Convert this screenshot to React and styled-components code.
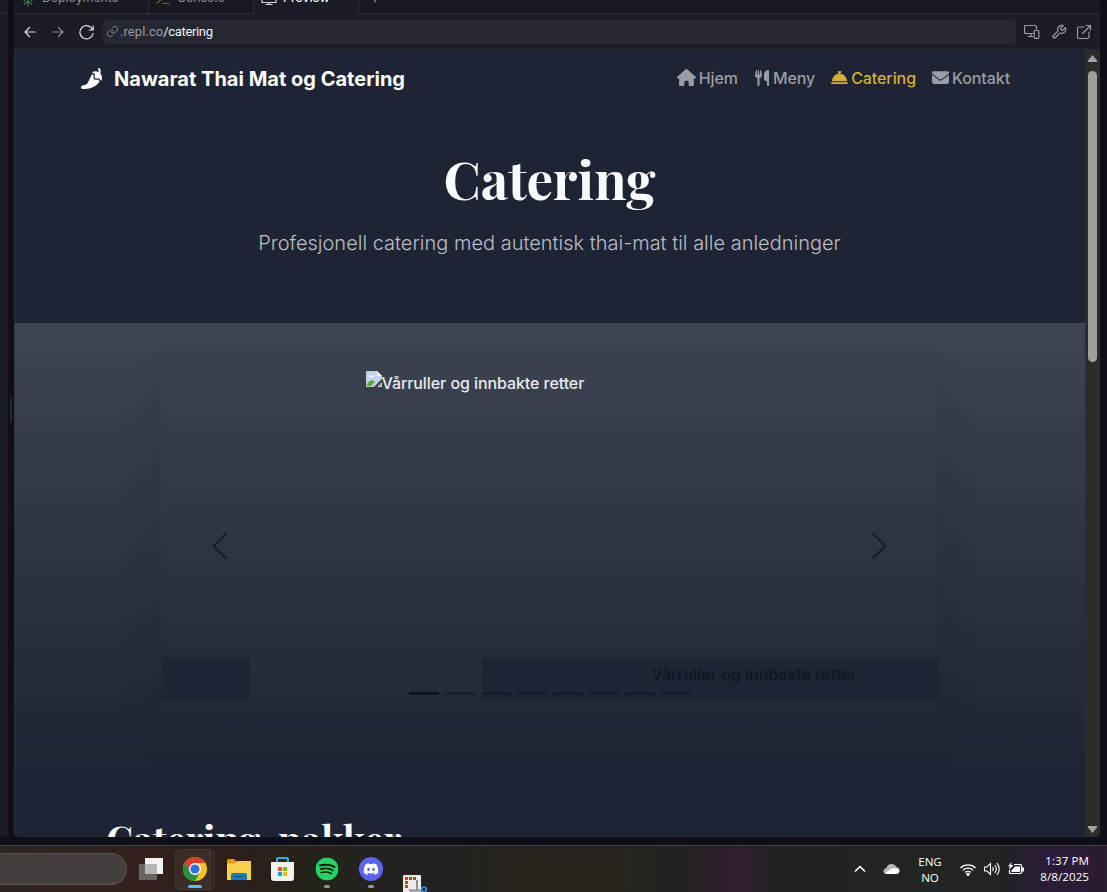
import React from "react";
import styled, { createGlobalStyle } from "styled-components";
import { FaHouse, FaUtensils, FaBellConcierge, FaEnvelope, FaPepperHot } from "react-icons/fa6";
import { SiSpotify, SiDiscord } from "react-icons/si";

const Global = createGlobalStyle`
  *, *::before, *::after { box-sizing: border-box; }
  body { margin: 0; background: #0e0f18; }
  h1, h2, p { margin: 0; }
`;

const Screen = styled.div`
  width: 1107px;
  height: 892px;
  overflow: hidden;
  display: flex;
  flex-direction: column;
  background: #0e0f18;
  font-family: Inter, sans-serif;
`;

const Workspace = styled.div`
  height: 837px;
  display: flex;
`;

const SidePane = styled.div`
  width: 8px;
  height: 837px;
  padding-top: 13px;
  background: #1b1d26;
  border-radius: 0 0 4px 0;
  &::after { content: ""; display: block; height: 1px; background: #2a2d37; }
`;

const Gutter = styled.div`
  width: 6px;
  display: flex;
  align-items: center;
  justify-content: center;
  &::before { content: ""; width: 2px; height: 24px; margin-top: -18px; background: #252832; }
`;

const Pane = styled.div`
  width: 1086px;
  display: flex;
  flex-direction: column;
  background: #1b1d26;
  border-radius: 0 0 5px 5px;
  overflow: hidden;
`;

const Tabs = styled.div`
  height: 14px;
  display: flex;
  background: #181821;
`;

const Tab = styled.div`
  width: ${(p) => p.$w}px;
  height: 14px;
  overflow: hidden;
  display: flex;
  align-items: flex-start;
  gap: ${(p) => p.$gap ?? 6}px;
  padding-left: ${(p) => p.$pad}px;
  font: ${(p) => (p.$active ? 500 : 400)} 12.3px/16px Inter, sans-serif;
  color: ${(p) => (p.$active ? "#f2f3f7" : "#8d909c")};
  background: ${(p) => (p.$active ? "#1b1d26" : "transparent")};
  border-right: 1px solid ${(p) => (p.$fill ? "transparent" : "#2a2d37")};
  border-bottom: 1px solid ${(p) => (p.$active ? "#1b1d26" : "#2a2d37")};
  flex: ${(p) => (p.$fill ? 1 : "none")};
  svg { flex: none; margin-top: -9px; }
  span { margin-top: -10px; }
`;

const Toolbar = styled.div`
  height: 36px;
  display: flex;
  align-items: center;
  padding: 0 8px 0 8px;
  border-bottom: 1px solid #272a35;
`;

const ToolIcon = styled.svg`
  width: ${(p) => p.$size || 16}px;
  height: ${(p) => p.$size || 16}px;
  flex: none;
  margin-right: ${(p) => p.$mr || 0}px;
  fill: none;
  stroke: ${(p) => p.$c || "#9a9da8"};
  stroke-width: ${(p) => p.$sw || 1.2};
  stroke-linecap: round;
  stroke-linejoin: round;
`;

const Address = styled.div`
  width: 914px;
  height: 24px;
  margin-right: 8px;
  padding-left: 4px;
  display: flex;
  align-items: center;
  border-radius: 4px;
  background: #252830;
  color: #969aa5;
  font: 400 13px/24px Roboto, sans-serif;
  letter-spacing: 0.08px;
  b { font-weight: 400; color: #f0f1f4; letter-spacing: -0.35px; }
`;

const Viewport = styled.div`
  flex: 1;
  display: flex;
  min-height: 0;
`;

const Page = styled.main`
  width: 1071px;
  height: 787px;
  overflow: hidden;
  border-left: 1px solid #2a3342;
  background: #1e2433;
`;

const Nav = styled.nav`
  height: 57px;
  display: flex;
  align-items: center;
  justify-content: space-between;
  padding: 0 75px 0 66px;
`;

const Brand = styled.div`
  display: flex;
  align-items: center;
  gap: 12px;
  color: #fff;
  font-size: 20px;
  font-weight: 700;
  letter-spacing: 0.01px;
  white-space: nowrap;
`;

const Links = styled.div`
  display: flex;
  gap: 16px;
  margin-top: -2px;
`;

const Link = styled.a`
  display: flex;
  align-items: center;
  gap: 3px;
  font-size: 16px;
  font-weight: 500;
  line-height: 24px;
  letter-spacing: -0.09px;
  color: ${(p) => (p.$active ? "#d4af37" : "#9a9da5")};
  svg { width: ${(p) => p.$iw}px; height: ${(p) => p.$ih}px; }
`;

const Hero = styled.header`
  height: 216px;
  display: flex;
  flex-direction: column;
  align-items: center;
  padding: 39px 1px 0 0;
`;

const Title = styled.h1`
  font: 700 52.8px/64px "Playfair Display", "Liberation Serif", serif;
  color: #f8fafc;
`;

const Lead = styled.p`
  margin-top: 17px;
  font-size: 20px;
  font-weight: 300;
  line-height: 32px;
  color: #b9bdc5;
  white-space: nowrap;
`;

const Showcase = styled.section`
  height: 448px;
  padding: 48px 147px 0 147px;
  background: linear-gradient(180deg, #3e4451 0%, #1e2433 100%);
`;

const Carousel = styled.div`
  position: relative;
  height: 350px;
  border-radius: 15px;
  box-shadow: 0 14px 40px rgba(25, 30, 46, 0.17);
`;

const Slide = styled.div`
  height: 286px;
  display: flex;
  align-items: flex-start;
  padding-left: 204px;
  color: #e8eaee;
  font-size: 16px;
  font-weight: 500;
  line-height: 24px;
  letter-spacing: -0.08px;
`;

const AltText = styled.span`
  margin-left: -0.5px;
`;

const Captions = styled.div`
  height: 44px;
  display: flex;
  justify-content: space-between;
`;

const Caption = styled.div`
  width: ${(p) => p.$w}px;
  padding-left: ${(p) => p.$pad || 0}px;
  background: #1e2434;
  border-radius: ${(p) => p.$radius};
  color: #101624;
  font-size: 16px;
  font-weight: 500;
  line-height: 34px;
  white-space: nowrap;
`;

const Arrow = styled.svg`
  position: absolute;
  top: 158px;
  ${(p) => p.$side}: 42px;
  width: 32px;
  height: 32px;
  fill: none;
  stroke: #191d26;
  stroke-width: 2;
  stroke-linecap: round;
  stroke-linejoin: round;
`;

const Indicators = styled.div`
  position: absolute;
  left: 0;
  right: 1px;
  top: 321px;
  display: flex;
  justify-content: center;
  gap: 6px;
`;

const Indicator = styled.span`
  width: 30px;
  height: 3px;
  background: #0c111f;
  opacity: ${(p) => (p.$active ? 0.9 : 0.45)};
`;

const Packages = styled.h2`
  margin: 45px 0 0 91px;
  font: 700 38.4px/46px "Playfair Display", "Liberation Serif", serif;
  color: #f8fafc;
  white-space: nowrap;
`;

const Scrollbar = styled.div`
  width: 15px;
  height: 787px;
  display: flex;
  flex-direction: column;
  align-items: center;
  padding: 5px 0 4px;
  background: #2c2c2c;
  svg { display: block; fill: #a0a0a0; }
`;

const Thumb = styled.div`
  width: 9px;
  height: 291px;
  margin: 9px 0 auto;
  border-radius: 5px;
  background: #9f9f9f;
`;

const Taskbar = styled.footer`
  height: 47px;
  margin-top: 8px;
  display: flex;
  border-top: 1px solid #414146;
  background: linear-gradient(90deg, #2c2523 0, #33221b 125px, #2f2019 200px, #29221a 260px, #24231b 330px, #232223 430px, #28231b 530px, #28241d 620px, #232222 680px, #2f1e2f 740px, #232224 775px, #20241f 800px, #22251f 900px, #222325 1000px, #2b1b38 1050px, #2b1c30 1107px);
`;

const SearchPill = styled.div`
  width: 127px;
  height: 32px;
  margin: 7px 10px 0 0;
  border-radius: 0 16px 16px 0;
  border: 1px solid #5a5453;
  border-left: 0;
  background: #443f3d;
`;

const TaskItem = styled.div`
  width: ${(p) => p.$w || 44}px;
  margin-right: ${(p) => p.$mr || 0}px;
  height: 46px;
  padding-top: 11px;
  display: flex;
  flex-direction: column;
  align-items: center;
  &::after {
    content: "";
    width: ${(p) => (p.$state === "active" ? 14 : 6)}px;
    height: 3px;
    margin-top: 4px;
    border-radius: 2px;
    background: ${(p) => (p.$state === "active" ? "#4cc2ff" : p.$state === "open" ? "#98958f" : "transparent")};
  }
  svg { display: block; flex: none; }
`;

const ActiveItem = styled(TaskItem)`
  width: 40px;
  height: 41px;
  margin: 3px 2px 0 -2px;
  padding: 7px 1px 0 0;
  border-radius: 5px;
  border: 1px solid #463630;
  background: linear-gradient(90deg, #3b2c26 34px, #4b3c34 34px, #4b3c34 35px, #33261f 35px);
`;

const Snip = styled.div`
  padding: 29px 0 0 9px;
  svg { display: block; }
`;

const Tray = styled.div`
  margin-left: auto;
  display: flex;
  align-items: center;
  padding-right: 18px;
  color: #fff;
  font: 400 11.6px/16px "Open Sans", sans-serif;
  svg { display: block; flex: none; }
`;

const Lang = styled.div`
  width: 24px;
  margin: 2px 18px 0 18px;
  display: flex;
  flex-direction: column;
  align-items: center;
`;

const Clock = styled.div`
  margin-left: 14px;
  width: 51px;
  display: flex;
  flex-direction: column;
  align-items: flex-end;
  white-space: nowrap;
  letter-spacing: 0.05px;
`;

const TrayIcons = styled.div`
  display: flex;
  align-items: center;
  gap: 8px;
`;

const Cloud = styled.svg`
  margin-left: 17px;
`;

const BrokenImage = () => (
  <svg width="16" height="16" viewBox="0 0 16 16">
    <path d="M0 0h11l5 5v11H0z" fill="#c5c8cc" />
    <path d="M1 1h10v4h4v1L6 15H1z" fill="#c3d5fb" />
    <path d="M3 6c0-2 2-2 2.400-1C7 4 8 5 8 6z" fill="#fff" />
    <path d="M1 15v-2c2-4 6-5 8-2l-4 4z" fill="#55ab3a" />
    <path d="M11 0l5 5h-5z" fill="#f1f3f6" />
    <path d="M8 16l8-8v3l-5 5z" fill="#333947" />
    <path d="M12 15l3-3v3z" fill="#80b978" />
  </svg>
);

const Chrome = () => (
  <svg width="24" height="24" viewBox="0 0 48 48">
    <circle cx="24" cy="24" r="24" fill="#fbc116" />
    <path d="M3.200 12A24 24 0 0 1 44.800 12H24L13.600 30z" fill="#e33b2e" />
    <path d="M3.200 12A24 24 0 0 0 24 48L34.400 30 24 36 13.600 30z" fill="#229342" />
    <circle cx="24" cy="24" r="12" fill="#fff" />
    <circle cx="24" cy="24" r="9.200" fill="#2f72e2" />
  </svg>
);

const Folder = () => (
  <svg width="24" height="24" viewBox="0 0 24 24">
    <path d="M0 3.500Q0 2 1.500 2H7l2.500 2.500H16V9H0z" fill="#e09b0c" />
    <path d="M0 6.500h8L10 4h14v19H0z" fill="#fdcf4b" />
    <path d="M4 23v-5q0-2 2-2h12q2 0 2 2v5z" fill="#117ac9" />
    <path d="M7.500 19.500h9" stroke="#074a88" strokeWidth="1" />
  </svg>
);

const Store = () => (
  <svg width="24" height="24" viewBox="0 0 24 24">
    <path d="M6 5V2.500Q6 1 7.500 1h8q1.500 0 1.500 1.500V5" fill="none" stroke="#29b2e8" strokeWidth="2" />
    <path d="M0 5h23v16q0 3-3 3H3q-3 0-3-3z" fill="#f1f1f1" />
    <path d="M7 10h4v4H7z" fill="#f25022" />
    <path d="M12 10h4v4h-4z" fill="#7fba00" />
    <path d="M7 15h4v4H7z" fill="#00a4ef" />
    <path d="M12 15h4v4h-4z" fill="#ffb900" />
  </svg>
);

const Discord = () => (
  <svg width="24" height="24" viewBox="0 0 24 24">
    <circle cx="12" cy="12" r="12" fill="#5865f2" />
    <SiDiscord x="4.500" y="4.500" size={15} color="#fff" />
  </svg>
);

const Spotify = () => (
  <svg width="24" height="24" viewBox="0 0 24 24">
    <circle cx="12" cy="12" r="10.500" fill="#101510" />
    <SiSpotify x="0.500" y="0.500" size={23} color="#1ed760" />
  </svg>
);

const links = [
  { label: "Hjem", Icon: FaHouse, iw: 19, ih: 17 },
  { label: "Meny", Icon: FaUtensils, iw: 16, ih: 16 },
  { label: "Catering", Icon: FaBellConcierge, iw: 17, ih: 17 },
  { label: "Kontakt", Icon: FaEnvelope, iw: 17, ih: 17 },
];

export default function App() {
  return (
    <Screen>
      <Global />
      <Workspace>
        <SidePane />
        <Gutter />
        <Pane>
          <Tabs>
            <Tab $w={135} $pad={6}>
              <ToolIcon viewBox="0 0 16 16" $c="#3c7d4b"><path d="M8 5v10M4 10l4-4 4 4M4.500 13L8 10l3.500 3" /></ToolIcon>
              <span>Deployments</span>
            </Tab>
            <Tab $w={105} $pad={6}>
              <ToolIcon viewBox="0 0 16 16" $c="#6d6540"><path d="M2 4l5 4-5 4M8 12.500h6" /></ToolIcon>
              <span>Console</span>
            </Tab>
            <Tab $w={105} $pad={7} $active>
              <ToolIcon viewBox="0 0 16 16" $c="#d5d7de"><path d="M1 2h14v9.500H1zM8 11.500v2M5 13.500h6" /></ToolIcon>
              <span>Preview</span>
            </Tab>
            <Tab $fill $pad={8}>
              <ToolIcon viewBox="0 0 16 16"><path d="M8 3v8M4 7h8" /></ToolIcon>
            </Tab>
          </Tabs>
          <Toolbar>
            <ToolIcon viewBox="0 0 16 16" $mr={12} $c="#e0e1e6"><path d="M13 8H3M7.500 3.500L3 8l4.500 4.500" /></ToolIcon>
            <ToolIcon viewBox="0 0 16 16" $mr={12} $c="#888b95"><path d="M3 8h10M8.500 3.500L13 8l-4.500 4.500" /></ToolIcon>
            <ToolIcon viewBox="0 0 16 16" $mr={8} $c="#e0e1e6"><path d="M15.200 2v4h-4M14.700 6a6.600 6.600 0 1 0 .3 3.500" /></ToolIcon>
            <Address>
              <ToolIcon viewBox="0 0 24 24" $c="#858995" $size={13} $mr={1} $sw={1.8}>
                <path d="M10 13a5 5 0 0 0 7.500.5l3-3a5 5 0 0 0-7-7l-1.800 1.700M14 11a5 5 0 0 0-7.500-.5l-3 3a5 5 0 0 0 7 7l1.700-1.700" />
              </ToolIcon>
              .repl.co<b>/catering</b>
            </Address>
            <ToolIcon viewBox="0 0 16 16" $mr={10.5}><path d="M8.500 9.500h-7q-1 0-1-1v-6q0-1 1-1h10q1 0 1 1V5M7 10v2.500M4 12.500h4.500M11 6.500h3q.8 0 .8.8v6.200q0 .8-.8.8h-3q-.8 0-.8-.8V7.300q0-.8.8-.8" /></ToolIcon>
            <ToolIcon viewBox="0 0 24 24" $mr={9.5} $sw={1.8}><path d="M14.700 6.300a1 1 0 0 0 0 1.400l1.600 1.600a1 1 0 0 0 1.400 0l3.800-3.800a6 6 0 0 1-7.900 7.900l-6.900 6.900a2.100 2.100 0 0 1-3-3l6.900-6.900a6 6 0 0 1 7.900-7.900z" /></ToolIcon>
            <ToolIcon viewBox="0 0 16 16"><path d="M13 8v5q0 1.500-1.500 1.500H3q-1.500 0-1.500-1.500V4.500Q1.500 3 3 3h5M10 1.500h4.500V6M14.500 1.500L6.500 9.500" /></ToolIcon>
          </Toolbar>
          <Viewport>
            <Page>
              <Nav>
                <Brand><FaPepperHot size={21} />Nawarat Thai Mat og Catering</Brand>
                <Links>
                  {links.map(({ label, Icon, iw, ih }) => (
                    <Link key={label} $active={label === "Catering"} $iw={iw} $ih={ih}>
                      <Icon />
                      {label}
                    </Link>
                  ))}
                </Links>
              </Nav>
              <Hero>
                <Title>Catering</Title>
                <Lead>Profesjonell catering med autentisk thai-mat til alle anledninger</Lead>
              </Hero>
              <Showcase>
                <Carousel>
                  <Slide>
                    <BrokenImage />
                    <AltText>Vårruller og innbakte retter</AltText>
                  </Slide>
                  <Captions>
                    <Caption $w={88} $radius="0 4px 4px 0" />
                    <Caption $w={456} $pad={169.5} $radius="4px 0 0 4px">Vårruller og innbakte retter</Caption>
                  </Captions>
                  <Arrow $side="left" viewBox="0 0 32 32"><path d="M22 4.500L9.500 17 22 29" /></Arrow>
                  <Arrow $side="right" viewBox="0 0 32 32"><path d="M9 4.500L21.500 17 9 29" /></Arrow>
                  <Indicators>
                    {[0, 1, 2, 3, 4, 5, 6, 7].map((i) => <Indicator key={i} $active={i === 0} />)}
                  </Indicators>
                </Carousel>
              </Showcase>
              <Packages>Catering-pakker</Packages>
            </Page>
            <Scrollbar>
              <svg width="9" height="7" viewBox="0 0 9 7"><path d="M4.500 0L9 5.500V7H0V5.500z" /></svg>
              <Thumb />
              <svg width="9" height="7" viewBox="0 0 9 7"><path d="M4.500 7L9 1.500V0H0v1.500z" /></svg>
            </Scrollbar>
          </Viewport>
        </Pane>
      </Workspace>
      <Taskbar>
        <SearchPill />
        <TaskItem $w={28} $mr={12}>
          <svg width="24" height="24" viewBox="0 0 24 24">
            <path d="M0 7h18v16H0z" fill="#666461" />
            <path d="M6 1h18v16H6z" fill="#f3f3f3" />
            <path d="M6 7h12v10H6z" fill="#b6b6b6" />
          </svg>
        </TaskItem>
        <ActiveItem $state="active"><Chrome /></ActiveItem>
        <TaskItem><Folder /></TaskItem>
        <TaskItem><Store /></TaskItem>
        <TaskItem $state="open"><Spotify /></TaskItem>
        <TaskItem $state="open"><Discord /></TaskItem>
        <Snip>
          <svg width="26" height="18" viewBox="0 0 26 18">
            <rect x="1" y="0" width="18" height="19" rx="1" fill="#ececec" />
            <path d="M4.500 13V3.500H14" fill="none" stroke="#d63b13" strokeWidth="3" strokeDasharray="3 1" />
            <path d="M15 5v10M7 15.500h12" fill="none" stroke="#8c8f93" strokeWidth="2" />
            <circle cx="22" cy="14.500" r="2.300" fill="none" stroke="#1f94d8" strokeWidth="1.800" />
          </svg>
        </Snip>
        <Tray>
          <svg width="12" height="12" viewBox="0 0 12 12"><path d="M1 8.500L6 3.500l5 5" fill="none" stroke="#fff" strokeWidth="1.500" /></svg>
          <Cloud width="17" height="12" viewBox="0 0 17 12">
            <path d="M3.500 11Q0 10.500.5 7.500 1 5 3.500 5 4.500 1 8.500 1q3.500 0 4.700 3Q17 4.500 16.500 8q-.5 3-3.500 3z" fill="#b9b9b9" />
            <path d="M3.500 11L2 10l8-5q6 0 6.500 3-.5 3-3.500 3z" fill="#fff" />
          </Cloud>
          <Lang><span>ENG</span><span>NO</span></Lang>
          <TrayIcons>
            <svg width="16" height="13" viewBox="0 0 16 13" fill="none" stroke="#fff" strokeWidth="1.200">
              <path d="M.5 5a10.500 10.500 0 0 1 15 0M2.800 7.400a7.200 7.200 0 0 1 10.400 0M5 9.500a4.200 4.200 0 0 1 6 0" />
              <circle cx="8" cy="11.300" r="1.100" fill="#fff" />
            </svg>
            <svg width="16" height="14" viewBox="0 0 16 14" fill="none" stroke="#fff" strokeWidth="1.100">
              <path d="M.6 5H3l3.500-3.500v11L3 9H.6zM8.500 5q1.500 2 0 4M10.800 3q3 4 0 8M13 1.200q4.500 5.800 0 11.600" />
            </svg>
            <svg width="16" height="14" viewBox="0 0 16 14">
              <path d="M6 2.500h6.500q1 0 1 1v7q0 1-1 1h-10q-1 0-1-1V8" fill="none" stroke="#fff" strokeWidth="1.200" />
              <path d="M7 4.500h5V10H3.500V8.500z" fill="#fff" />
              <path d="M14 5.500h2v4h-2zM3.500 0L0 4.500h2L1 8l4.500-5H3z" fill="#fff" />
            </svg>
          </TrayIcons>
          <Clock><span>1:37 PM</span><span>8/8/2025</span></Clock>
        </Tray>
      </Taskbar>
    </Screen>
  );
}
